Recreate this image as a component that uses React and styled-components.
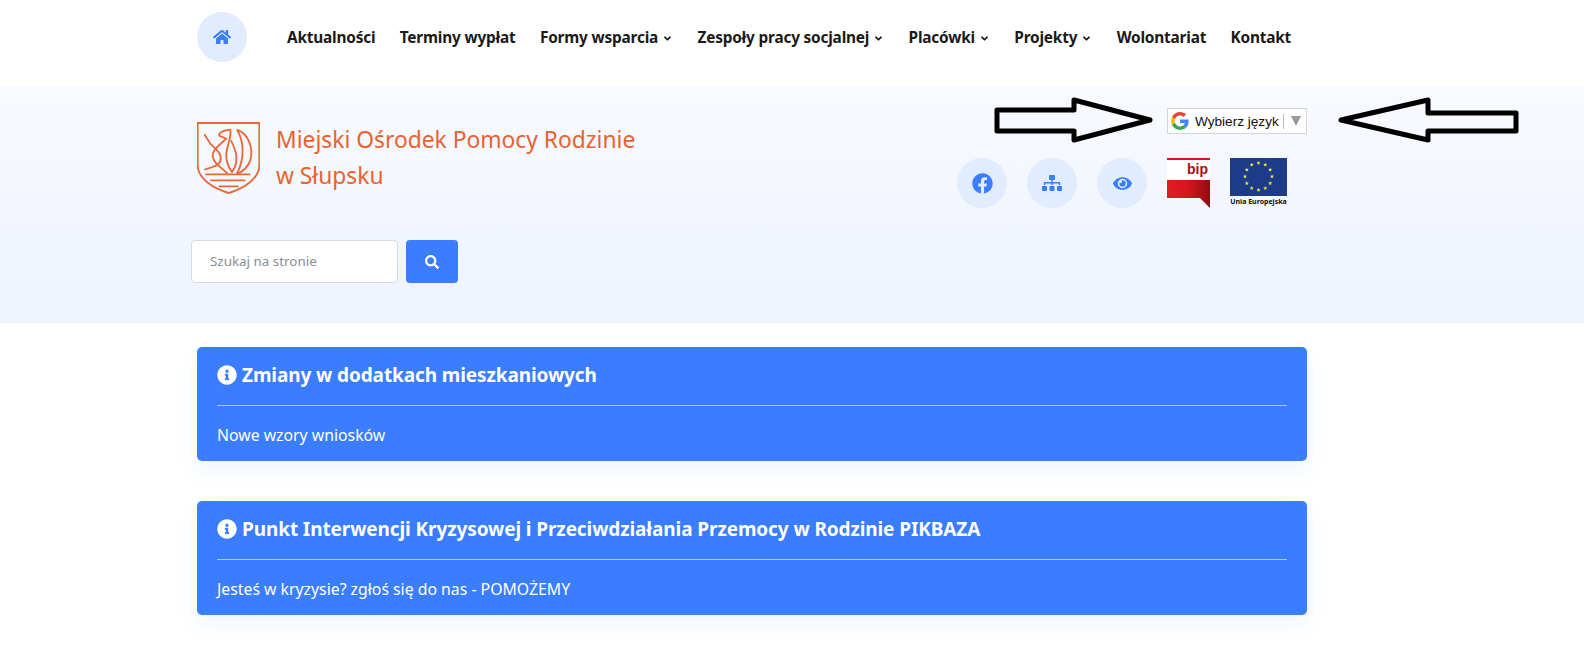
import React from 'react'
import styled, { createGlobalStyle } from 'styled-components'
import { FaHome, FaSearch, FaFacebook, FaSitemap, FaEye, FaInfoCircle, FaAngleDown } from 'react-icons/fa'

const Global = createGlobalStyle`
  body {
    margin: 0;
    background: #fff;
    font-family: "Noto Sans", "Open Sans", sans-serif;
    color: #161616;
  }
`

const Page = styled.div`
  position: relative;
  height: 655px;
  overflow: hidden;
`

const Container = styled.div`
  width: 1110px;
  margin-left: 197px;
`

const NavBar = styled.nav`
  height: 86px;
  background: #fff;
`

const NavInner = styled(Container)`
  display: flex;
  align-items: flex-start;
  padding-top: 12px;
`

const IconCircle = styled.a`
  width: 50px;
  height: 50px;
  border-radius: 50%;
  background: #e2ecff;
  color: #3a7dff;
  display: flex;
  align-items: center;
  justify-content: center;
  font-size: ${props => props.size || 18}px;
  flex: none;
`

const NavLinks = styled.div`
  display: flex;
  align-items: center;
  height: 50px;
  margin-left: 40px;
  gap: 24.4px;
`

const NavLink = styled.a`
  display: flex;
  align-items: center;
  font-size: 15.4px;
  font-weight: 700;
  letter-spacing: -0.2px;
  color: #1a1a1a;
  white-space: nowrap;

  svg {
    font-size: 11px;
    margin-left: 4px;
    margin-top: 2px;
  }
`

const Hero = styled.header`
  height: 237px;
  background: linear-gradient(180deg, #f8faff 0%, #eef3fe 100%);
`

const HeroTop = styled(Container)`
  display: flex;
  justify-content: space-between;
  align-items: flex-start;
  height: 154px;
`

const Brand = styled.div`
  display: flex;
  align-items: flex-start;
  padding-top: 36px;
  gap: 16px;
`

const BrandName = styled.h1`
  margin: 0;
  font-size: 22.8px;
  font-weight: 400;
  line-height: 36px;
  color: #e8632f;
`

const Tools = styled.div`
  display: flex;
  flex-direction: column;
  align-items: flex-end;
  padding-top: 22px;
  gap: 24px;
`

const Translate = styled.div`
  width: 140px;
  height: 26px;
  box-sizing: border-box;
  background: #fff;
  border: 1px solid #d5d5d5;
  display: flex;
  align-items: center;
  padding-left: 3px;
  font-family: "Liberation Sans", Arial, sans-serif;
  font-size: 13.6px;
  color: #111;
`

const TranslateLabel = styled.span`
  margin-left: 6px;
  padding-right: 4px;
  border-right: 1px solid #bbb;
  line-height: 15px;
  white-space: nowrap;
`

const TranslateArrow = styled.span`
  margin-left: 7px;
  width: 0;
  height: 0;
  border-left: 5px solid transparent;
  border-right: 5px solid transparent;
  border-top: 10px solid #999;
`

const ToolRow = styled.div`
  display: flex;
  align-items: flex-start;
  gap: 20px;
  padding-right: 20px;
`

const BipMark = styled.div`
  width: 43px;
  height: 50px;
  flex: none;
  position: relative;
`

const BipText = styled.span`
  position: absolute;
  right: 2px;
  top: 3px;
  font-family: "Liberation Sans", Arial, sans-serif;
  font-size: 14px;
  line-height: 17px;
  font-weight: 700;
  color: #a80f16;
`

const EuMark = styled.div`
  width: 57px;
  display: flex;
  flex-direction: column;
  align-items: center;
`

const EuCaption = styled.span`
  font-size: 7px;
  line-height: 12px;
  font-weight: 700;
  color: #111;
  white-space: nowrap;
`

const SearchRow = styled(Container)`
  display: flex;
  gap: 8px;
  margin-left: 191px;
`

const SearchInput = styled.input`
  width: 207px;
  height: 43px;
  box-sizing: border-box;
  border: 1px solid #d5d9e0;
  border-radius: 4px;
  padding: 0 18px 2px;
  background: #fff;
  font-family: inherit;
  font-size: 13.4px;
  outline: none;

  &::placeholder {
    color: #868e96;
    opacity: 1;
  }
`

const SearchButton = styled.button`
  width: 52px;
  height: 43px;
  border: 0;
  border-radius: 4px;
  background: #3a7dff;
  color: #fff;
  font-size: 14px;
  display: flex;
  align-items: center;
  justify-content: center;
`

const Main = styled(Container)`
  display: flex;
  flex-direction: column;
  gap: 40px;
  padding-top: 24px;
`

const Notice = styled.article`
  height: 114px;
  box-sizing: border-box;
  padding: 0 20px;
  border-radius: 5px;
  background: #3a7dff;
  color: #fff;
  box-shadow: 0 10px 20px rgba(58, 125, 255, 0.08);
`

const NoticeTitle = styled.h4`
  display: flex;
  align-items: center;
  gap: 5px;
  height: 55px;
  padding-bottom: 3px;
  margin: 0;
  border-bottom: 1px solid rgba(255, 255, 255, 0.6);
  font-size: 19px;
  font-weight: 700;
  letter-spacing: -0.1px;

  svg {
    font-size: 20px;
  }
`

const NoticeText = styled.p`
  margin: 0;
  font-size: 15.8px;
  line-height: 58px;
`

const Arrow = styled.svg`
  position: absolute;
  left: 0;
  top: 0;
  pointer-events: none;
`

const ShieldLogo = () => (
  <svg width="63" height="72" viewBox="20 36 189 214" fill="none" stroke="#e8683a" strokeWidth="5.5" style={{ flex: 'none' }}>
    <path d="M22 38 H207 V165 C207 205 160 235 115 248 C70 235 22 205 22 165 Z" />
    <path d="M85 75 C88 65 100 60 120 58 C124 80 112 100 108 128 C106 150 114 170 125 185 C136 170 142 148 136 125 C132 110 126 98 122 90" />
    <path d="M85 75 L108 85 C92 100 74 112 68 128 C62 146 78 162 95 175 L112 190" />
    <path d="M42 72 L60 100 L78 118 C92 130 96 148 85 160 C76 170 58 172 42 178" />
    <path d="M140 58 C175 70 190 115 180 150 C172 170 155 185 140 190" />
    <path d="M140 58 C160 90 165 140 140 190" />
    <path d="M45 192 H180 M60 210 H165 M85 228 H145" />
  </svg>
)

const GoogleG = () => (
  <svg width="18" height="18" viewBox="0 0 48 48" style={{ flex: 'none' }}>
    <path fill="#EA4335" d="M24 9.500c3.500 0 6.700 1.200 9.200 3.600l6.900-6.900C35.900 2.400 30.500 0 24 0 14.600 0 6.500 5.400 2.600 13.200l8 6.200C12.500 13.600 17.800 9.500 24 9.500z" />
    <path fill="#4285F4" d="M47 24.500c0-1.600-.1-3.100-.4-4.500H24v9h12.900c-.6 3-2.200 5.500-4.700 7.200l7.700 6c4.500-4.200 7.100-10.300 7.100-17.700z" />
    <path fill="#FBBC05" d="M10.500 28.600c-.5-1.500-.8-3-.8-4.600s.3-3.200.8-4.600l-8-6.200C.9 16.500 0 20.100 0 24s.9 7.500 2.600 10.800l7.900-6.200z" />
    <path fill="#34A853" d="M24 48c6.500 0 11.900-2.100 15.900-5.800l-7.700-6c-2.100 1.400-4.900 2.300-8.200 2.300-6.200 0-11.500-4.200-13.400-9.800l-8 6.200C6.500 42.600 14.600 48 24 48z" />
  </svg>
)

const BipFlag = () => (
  <svg width="43" height="50" viewBox="0 0 43 50">
    <defs>
      <linearGradient id="bipRed" x1="0" x2="1" y1="0" y2="0">
        <stop offset="0" stopColor="#e31b23" />
        <stop offset="0.5" stopColor="#d3161d" />
        <stop offset="1" stopColor="#8e0c10" />
      </linearGradient>
    </defs>
    <rect width="43" height="2" fill="#d3161d" />
    <rect y="2" width="43" height="20" fill="#fff" />
    <path d="M0 22 H43 V50 L33 40 H0 Z" fill="url(#bipRed)" />
  </svg>
)

const starPoints = Array.from({ length: 12 }, (_, i) => {
  const a = (i * Math.PI) / 6
  return [28.5 + 13.5 * Math.sin(a), 18.5 - 13.5 * Math.cos(a)]
})

// five pointed star around x,y
const star = (x, y, r) =>
  Array.from({ length: 10 }, (_, i) => {
    const a = (i * Math.PI) / 5
    const d = i % 2 ? r * 0.42 : r
    return `${x + d * Math.sin(a)},${y - d * Math.cos(a)}`
  }).join(' ')

const EuFlag = () => (
  <svg width="57" height="38" viewBox="0 0 57 38">
    <rect width="57" height="38" fill="#1c3b88" />
    {starPoints.map(([x, y], i) => (
      <polygon key={i} fill="#f5e63c" points={star(x, y, 2.2)} />
    ))}
  </svg>
)

const menu = [
  { label: 'Aktualności' },
  { label: 'Terminy wypłat' },
  { label: 'Formy wsparcia', sub: true },
  { label: 'Zespoły pracy socjalnej', sub: true },
  { label: 'Placówki', sub: true },
  { label: 'Projekty', sub: true },
  { label: 'Wolontariat' },
  { label: 'Kontakt' },
]

const notices = [
  { title: 'Zmiany w dodatkach mieszkaniowych', text: 'Nowe wzory wniosków' },
  { title: 'Punkt Interwencji Kryzysowej i Przeciwdziałania Przemocy w Rodzinie PIKBAZA', text: 'Jesteś w kryzysie? zgłoś się do nas - POMOŻEMY' },
]

export default function App() {
  return (
    <Page>
      <Global />
      <NavBar>
        <NavInner>
          <IconCircle size={18}><FaHome /></IconCircle>
          <NavLinks>
            {menu.map(item => (
              <NavLink key={item.label}>
                {item.label}
                {item.sub && <FaAngleDown />}
              </NavLink>
            ))}
          </NavLinks>
        </NavInner>
      </NavBar>
      <Hero>
        <HeroTop>
          <Brand>
            <ShieldLogo />
            <BrandName>Miejski Ośrodek Pomocy Rodzinie<br />w Słupsku</BrandName>
          </Brand>
          <Tools>
            <Translate>
              <GoogleG />
              <TranslateLabel>Wybierz język</TranslateLabel>
              <TranslateArrow />
            </Translate>
            <ToolRow>
              <IconCircle size={21}><FaFacebook /></IconCircle>
              <IconCircle size={20}><FaSitemap /></IconCircle>
              <IconCircle size={19}><FaEye /></IconCircle>
              <BipMark>
                <BipFlag />
                <BipText>bip</BipText>
              </BipMark>
              <EuMark>
                <EuFlag />
                <EuCaption>Unia Europejska</EuCaption>
              </EuMark>
            </ToolRow>
          </Tools>
        </HeroTop>
        <SearchRow>
          <SearchInput placeholder="Szukaj na stronie" />
          <SearchButton><FaSearch /></SearchButton>
        </SearchRow>
      </Hero>
      <Main>
        {notices.map(n => (
          <Notice key={n.title}>
            <NoticeTitle><FaInfoCircle />{n.title}</NoticeTitle>
            <NoticeText>{n.text}</NoticeText>
          </Notice>
        ))}
      </Main>
      <Arrow width="1584" height="655" viewBox="0 0 1584 655" fill="none" stroke="#000" strokeWidth="5" strokeLinejoin="round">
        <path d="M997 110 H1074 V100 L1150 120 L1074 140 V131 H997 Z" />
        <path d="M1341 120 L1428 100 V113 H1516 V131 H1428 V140 Z" />
      </Arrow>
    </Page>
  )
}
